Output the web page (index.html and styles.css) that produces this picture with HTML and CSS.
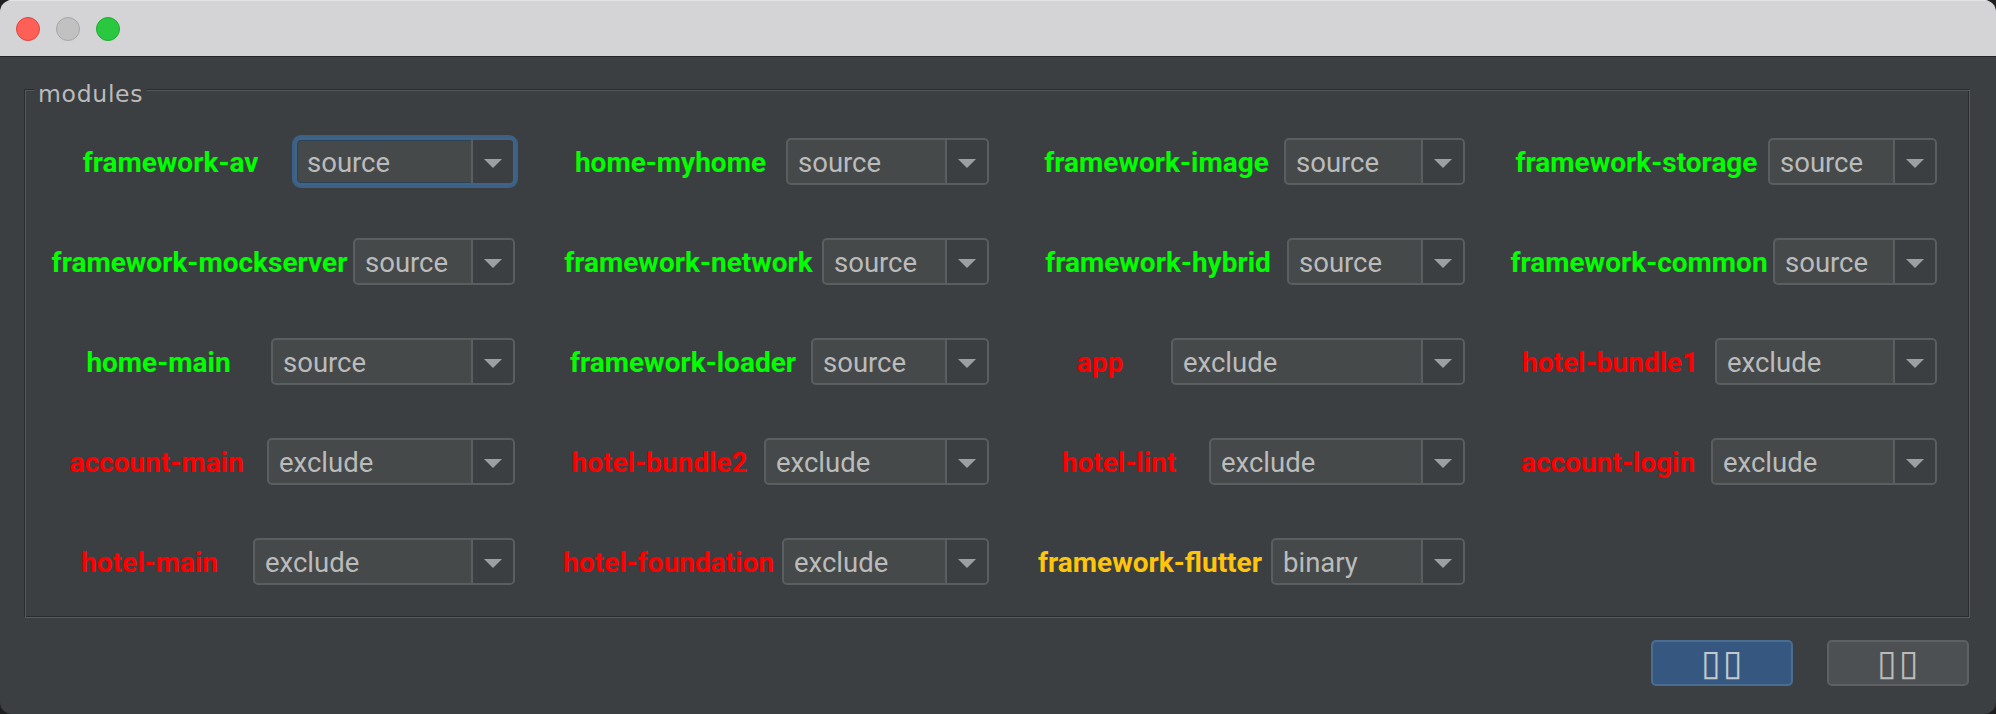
FILE: index.html
```html
<!DOCTYPE html>
<html lang="en">
<head>
<meta charset="utf-8">
<title>modules</title>
<link rel="stylesheet" href="styles.css">
</head>
<body>
<div class="window">
  <div class="titlebar">
    <span class="light red"></span>
    <span class="light gray"></span>
    <span class="light green"></span>
  </div>
  <div class="content">
    <div class="group">
      <div class="group-title">modules</div>
      <div class="grid">
        <div class="cell"><span class="label ok">framework-av</span><div class="combo focus w220"><span class="value">source</span><span class="arrow"></span></div></div>
        <div class="cell"><span class="label ok">home-myhome</span><div class="combo w203"><span class="value">source</span><span class="arrow"></span></div></div>
        <div class="cell"><span class="label ok">framework-image</span><div class="combo w181"><span class="value">source</span><span class="arrow"></span></div></div>
        <div class="cell"><span class="label ok">framework-storage</span><div class="combo w169"><span class="value">source</span><span class="arrow"></span></div></div>

        <div class="cell"><span class="label ok">framework-mockserver</span><div class="combo w162"><span class="value">source</span><span class="arrow"></span></div></div>
        <div class="cell"><span class="label ok">framework-network</span><div class="combo w167"><span class="value">source</span><span class="arrow"></span></div></div>
        <div class="cell"><span class="label ok">framework-hybrid</span><div class="combo w178"><span class="value">source</span><span class="arrow"></span></div></div>
        <div class="cell"><span class="label ok">framework-common</span><div class="combo w164"><span class="value">source</span><span class="arrow"></span></div></div>

        <div class="cell"><span class="label ok">home-main</span><div class="combo w244"><span class="value">source</span><span class="arrow"></span></div></div>
        <div class="cell"><span class="label ok">framework-loader</span><div class="combo w178"><span class="value">source</span><span class="arrow"></span></div></div>
        <div class="cell"><span class="label ex">app</span><div class="combo w294"><span class="value">exclude</span><span class="arrow"></span></div></div>
        <div class="cell"><span class="label ex">hotel-bundle1</span><div class="combo w222"><span class="value">exclude</span><span class="arrow"></span></div></div>

        <div class="cell"><span class="label ex">account-main</span><div class="combo w248"><span class="value">exclude</span><span class="arrow"></span></div></div>
        <div class="cell"><span class="label ex">hotel-bundle2</span><div class="combo w225"><span class="value">exclude</span><span class="arrow"></span></div></div>
        <div class="cell"><span class="label ex">hotel-lint</span><div class="combo w256"><span class="value">exclude</span><span class="arrow"></span></div></div>
        <div class="cell"><span class="label ex">account-login</span><div class="combo w226"><span class="value">exclude</span><span class="arrow"></span></div></div>

        <div class="cell"><span class="label ex">hotel-main</span><div class="combo w262"><span class="value">exclude</span><span class="arrow"></span></div></div>
        <div class="cell"><span class="label ex">hotel-foundation</span><div class="combo w207"><span class="value">exclude</span><span class="arrow"></span></div></div>
        <div class="cell"><span class="label bin">framework-flutter</span><div class="combo w194"><span class="value">binary</span><span class="arrow"></span></div></div>
      </div>
    </div>
    <div class="actions">
      <button class="btn primary" type="button">▯▯</button>
      <button class="btn" type="button">▯▯</button>
    </div>
  </div>
</div>
</body>
</html>
```

FILE: styles.css
```css
* { box-sizing: border-box; }

html, body {
  margin: 0;
  height: 100%;
}

body {
  background: #1f1f1f;
  font-family: Roboto, "Liberation Sans", sans-serif;
  overflow: hidden;
}

.window {
  width: 1996px;
  height: 714px;
  border-radius: 12px;
  overflow: hidden;
  background: #3c3f41;
  display: flex;
  flex-direction: column;
}

.titlebar {
  flex: none;
  height: 57px;
  background: #d4d4d6;
  border-top: 1px solid #e4e4e6;
  border-bottom: 1px solid #232527;
  display: flex;
  align-items: center;
  gap: 16px;
  padding-left: 16px;
}

.light {
  width: 24px;
  height: 24px;
  border-radius: 50%;
  border: 1px solid;
}
.light.red { background: #fe5f57; border-color: #e0443e; }
.light.gray { background: #c1c1c1; border-color: #a6a6a6; }
.light.green { background: #2ac840; border-color: #1fab2c; }

.content {
  flex: 1;
  display: flex;
  flex-direction: column;
  padding: 32px 26px 0 24px;
}

.group {
  border: 1px solid;
  border-color: #2a2c2e #575b5e #575b5e #2a2c2e;
  box-shadow: inset 1px 1px 0 #53575a, inset -1px -1px 0 #2a2c2e;
  padding: 0 0 32px 21px;
}

.group-title {
  width: fit-content;
  margin: -9px 0 0 -12px;
  padding: 0 4px;
  background: #3c3f41;
  color: #bbbbbb;
  font: 23.5px/26px "DejaVu Sans", sans-serif;
  letter-spacing: 0.7px;
}

.grid {
  margin-top: 31px;
  display: grid;
  grid-template-columns: 469px 434px 436px 432px;
  column-gap: 40px;
  row-gap: 53px;
}

.cell {
  display: flex;
  align-items: center;
  height: 47px;
}

.label {
  flex: 1;
  text-align: center;
  white-space: nowrap;
  font-weight: 700;
  font-size: 28px;
  padding-top: 2px;
}
.label.ok { color: #00ff00; }
.label.ex { color: #ff0000; }
.label.bin { color: #ffc50d; }

.combo {
  flex: none;
  display: flex;
  height: 47px;
  border: 2px solid #5b5e61;
  border-radius: 5px;
  background: #45494a;
  overflow: hidden;
}

.combo.focus {
  border-color: #3f6489;
  box-shadow: 0 0 0 3px #3d6185, inset 0 0 0 1px #2e4257;
  border-radius: 6px;
}

.value {
  flex: 1;
  display: flex;
  align-items: center;
  padding: 2px 0 0 10px;
  font-size: 27.5px;
  color: #bbbbbb;
}

.arrow {
  flex: none;
  width: 42px;
  border-left: 2px solid #5b5e61;
  background: #3c3f41;
  display: flex;
  align-items: center;
  justify-content: center;
}

.arrow::after {
  content: "";
  margin-top: 3px;
  border-left: 9px solid transparent;
  border-right: 9px solid transparent;
  border-top: 9px solid #9da0a3;
}

.w162 { width: 162px; }
.w164 { width: 164px; }
.w167 { width: 167px; }
.w169 { width: 169px; }
.w178 { width: 178px; }
.w181 { width: 181px; }
.w194 { width: 194px; }
.w203 { width: 203px; }
.w207 { width: 207px; }
.w220 { width: 220px; }
.w222 { width: 222px; }
.w225 { width: 225px; }
.w226 { width: 226px; }
.w244 { width: 244px; }
.w248 { width: 248px; }
.w256 { width: 256px; }
.w262 { width: 262px; }
.w294 { width: 294px; }

.actions {
  display: flex;
  justify-content: flex-end;
  gap: 34px;
  margin-top: 22px;
  padding-right: 1px;
}

.btn {
  width: 142px;
  height: 46px;
  border: 2px solid #5e6163;
  border-radius: 5px;
  background: #4c5052;
  color: #bbbbbb;
  font-family: "DejaVu Sans", sans-serif;
  font-size: 36px;
  line-height: 1;
  letter-spacing: 2px;
  padding: 0 0 0 2px;
}

.btn.primary {
  background: #365880;
  border-color: #4a6e92;
  color: #c4c9cf;
}
```
